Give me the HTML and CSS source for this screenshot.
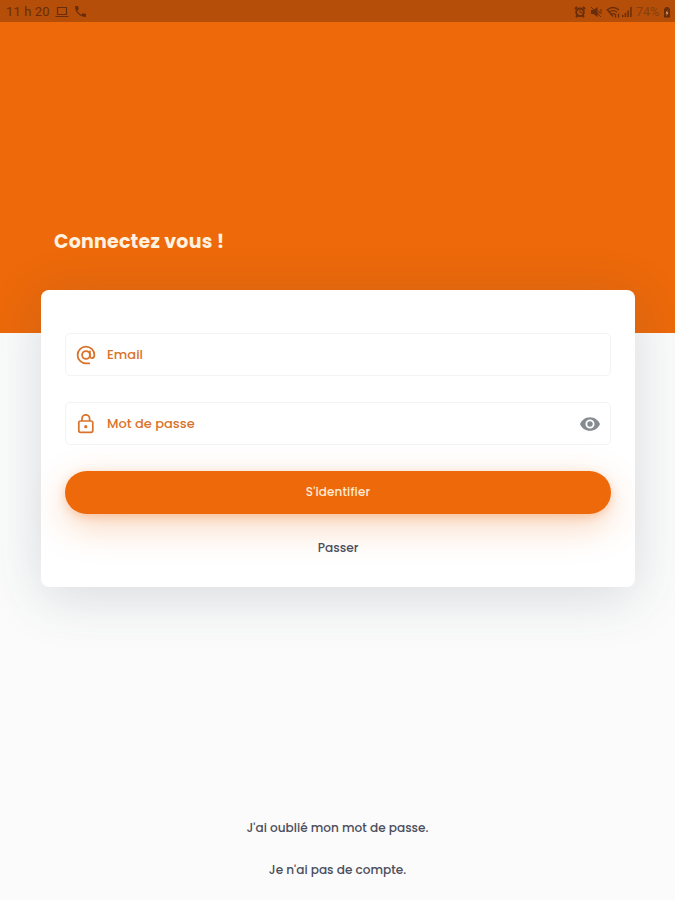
FILE: index.html
```html
<!DOCTYPE html>
<html lang="fr">
<head>
    <meta charset="UTF-8">
    <meta name="viewport" content="width=device-width, initial-scale=1.0">
    <title>Connexion</title>
    <link rel="stylesheet" href="styles.css">
</head>
<body>
    <div class="status-bar">
        <div class="status-left">
            <span class="time">11 h 20</span>
            <svg class="laptop" width="14" height="12" viewBox="0 0 14 12" fill="none" stroke="currentColor" stroke-width="1.2">
                <path d="M2.5 1.5h9v7h-9zM0.5 10.5h13"/>
            </svg>
            <svg width="11" height="11" viewBox="3 3 18 18" fill="currentColor">
                <path d="M6.62 10.79a15.15 15.15 0 0 0 6.59 6.59l2.2-2.2a1 1 0 0 1 1.02-.24c1.12.37 2.33.57 3.57.57a1 1 0 0 1 1 1V20a1 1 0 0 1-1 1C10.61 21 3 13.39 3 4a1 1 0 0 1 1-1h3.5a1 1 0 0 1 1 1c0 1.25.2 2.45.57 3.57a1 1 0 0 1-.25 1.02z"/>
            </svg>
        </div>
        <div class="status-right">
            <svg class="alarm" width="12" height="12" viewBox="0 0 12 12" fill="none" stroke="currentColor" stroke-width="2">
                <circle cx="6" cy="6.3" r="3.8"/>
                <path d="M1 3l2-2M11 3L9 1M2 11l1.5-1.5M10 11L8.5 9.5"/>
                <path d="M6 4v2.5h2" stroke-width="1"/>
            </svg>
            <svg class="mute" width="12" height="12" viewBox="0 0 12 12" fill="currentColor">
                <path d="M1 4h2.5L7.5 1v10L3.5 8H1z"/>
                <path d="M1 1l10 10M9 4.5v3M11 3v5" fill="none" stroke="currentColor"/>
            </svg>
            <svg width="14" height="12" viewBox="0 0 14 12" fill="none" stroke="currentColor" stroke-width="1.3">
                <path d="M1 4q6-5 12 0M3 6.2q4-3.200 8 0M5 8.3q2-1.500 4 0"/>
                <path d="M1 3.5l6 7M9.5 8v3.5M12.5 11.5V7.5"/>
            </svg>
            <svg width="12" height="12" viewBox="0 0 12 12" fill="currentColor">
                <path d="M1 9h1.5v2H1zM3.7 7h1.5v4H3.7zM6.4 4.5h1.5V11H6.4zM9.2 1h1.5v10H9.2z"/>
            </svg>
            <span class="battery-level">74%</span>
            <svg width="8" height="12" viewBox="0 0 8 12">
                <path d="M2.5 1h3v1.5H7V11.5H1V2.5h1.5z" fill="currentColor"/>
                <path d="M4.5 4L2.5 7.5h1.3L3.5 10l2-3.5H4.2z" fill="#f0a068"/>
            </svg>
        </div>
    </div>

    <header class="banner">
        <h1>Connectez vous !</h1>
    </header>

    <form class="card">
        <label class="field">
            <svg class="field-icon" width="20" height="20" viewBox="0 0 20 20" fill="none" stroke="currentColor" stroke-width="1.8" stroke-linecap="round">
                <circle cx="10" cy="10" r="3.9"/>
                <path d="M13.9 6.3v4.6c0 3.2 4.5 3.1 4.5-.9a8.4 8.4 0 1 0-8.4 8.4h3.2"/>
            </svg>
            <input type="text" placeholder="Email">
        </label>
        <label class="field">
            <svg class="field-icon" width="20" height="20" viewBox="0 0 20 20" fill="none" stroke="currentColor" stroke-width="1.7">
                <rect x="2.8" y="7" width="14" height="11.3" rx="1.8"/>
                <path d="M6 7V4.600a3.800 3.800 0 0 1 7.600 0V7"/>
                <circle cx="9.8" cy="12.700" r="1.6" fill="currentColor" stroke="none"/>
            </svg>
            <input type="password" placeholder="Mot de passe">
            <svg class="eye" width="20" height="20" viewBox="1 1 22 22" fill="currentColor">
                <path d="M12 4.5C7 4.5 2.73 7.61 1 12c1.73 4.39 6 7.5 11 7.5s9.27-3.11 11-7.5c-1.73-4.39-6-7.5-11-7.5zM12 17a5 5 0 1 1 0-10 5 5 0 0 1 0 10zm0-8a3 3 0 1 0 0 6 3 3 0 0 0 0-6z"/>
            </svg>
        </label>
        <button type="submit">S'identifier</button>
        <a class="skip">Passer</a>
    </form>

    <footer class="links">
        <a>J'ai oublié mon mot de passe.</a>
        <a>Je n'ai pas de compte.</a>
    </footer>
</body>
</html>
```
FILE: styles.css
```css
* {
    box-sizing: border-box;
}

body {
    margin: 0;
    height: 900px;
    display: flex;
    flex-direction: column;
    overflow: hidden;
    background-color: #fbfbfb;
    font-family: Poppins, Inter, sans-serif;
    color: #4b4e5c;
}

.status-bar {
    height: 22px;
    padding: 1px 4px 0 6px;
    display: flex;
    justify-content: space-between;
    background-color: #b54e08;
    color: #692d0b;
    font-family: Roboto, sans-serif;
    font-size: 13px;
}

.status-left, .status-right {
    display: flex;
    align-items: center;
}

.time {
    width: 43px;
    letter-spacing: 0.1px;
    white-space: nowrap;
}

.laptop {
    margin: 0 6px;
}

.status-right {
    gap: 1px;
}

.alarm, .mute {
    margin-right: 3px;
}

.battery-level {
    width: 26px;
    margin-left: 2px;
    font-size: 12.5px;
    color: #85400f;
}

.banner {
    height: 311px;
    flex-shrink: 0;
    padding: 206px 54px 0;
    background-color: #ed690a;
}

h1 {
    margin: 0;
    font-size: 19px;
    line-height: 27px;
    font-weight: 700;
    letter-spacing: 0.2px;
    color: #fff1df;
}

.card {
    height: 297px;
    flex-shrink: 0;
    margin: -43px 40px 0 41px;
    padding: 43px 24px 0;
    display: flex;
    flex-direction: column;
    background-color: #fff;
    border-radius: 8px;
    box-shadow: 0 10px 54px rgba(50, 70, 85, 0.18);
}

.field {
    height: 43px;
    margin-bottom: 26px;
    padding: 0 10px;
    display: flex;
    align-items: center;
    border: 1px solid #f3f3f3;
    border-radius: 5px;
    color: #d9732b;
}

.field-icon {
    margin-right: 11px;
}

.field input {
    flex: 1;
    min-width: 0;
    padding: 0;
    border: none;
    outline: none;
    background: none;
    font-family: inherit;
    font-size: 13px;
    font-weight: 500;
}

.field input::placeholder {
    color: #d9732b;
    opacity: 1;
}

.eye {
    color: #858b91;
}

button {
    height: 43px;
    padding: 0 0 2px;
    border: none;
    border-radius: 22px;
    background-color: #ed690a;
    color: #ffe9d2;
    font-family: inherit;
    font-size: 12px;
    font-weight: 500;
    letter-spacing: 0.15px;
    box-shadow: 0 3px 10px rgba(237, 105, 10, 0.25), 0 12px 36px rgba(237, 105, 10, 0.28);
}

.skip {
    margin-top: 25px;
    text-align: center;
    font-size: 12.2px;
    line-height: 18px;
    font-weight: 500;
}

.links {
    margin-top: auto;
    padding-bottom: 21px;
    display: flex;
    flex-direction: column;
    align-items: center;
    gap: 24px;
    font-size: 12.1px;
    line-height: 18px;
    font-weight: 500;
}
```
